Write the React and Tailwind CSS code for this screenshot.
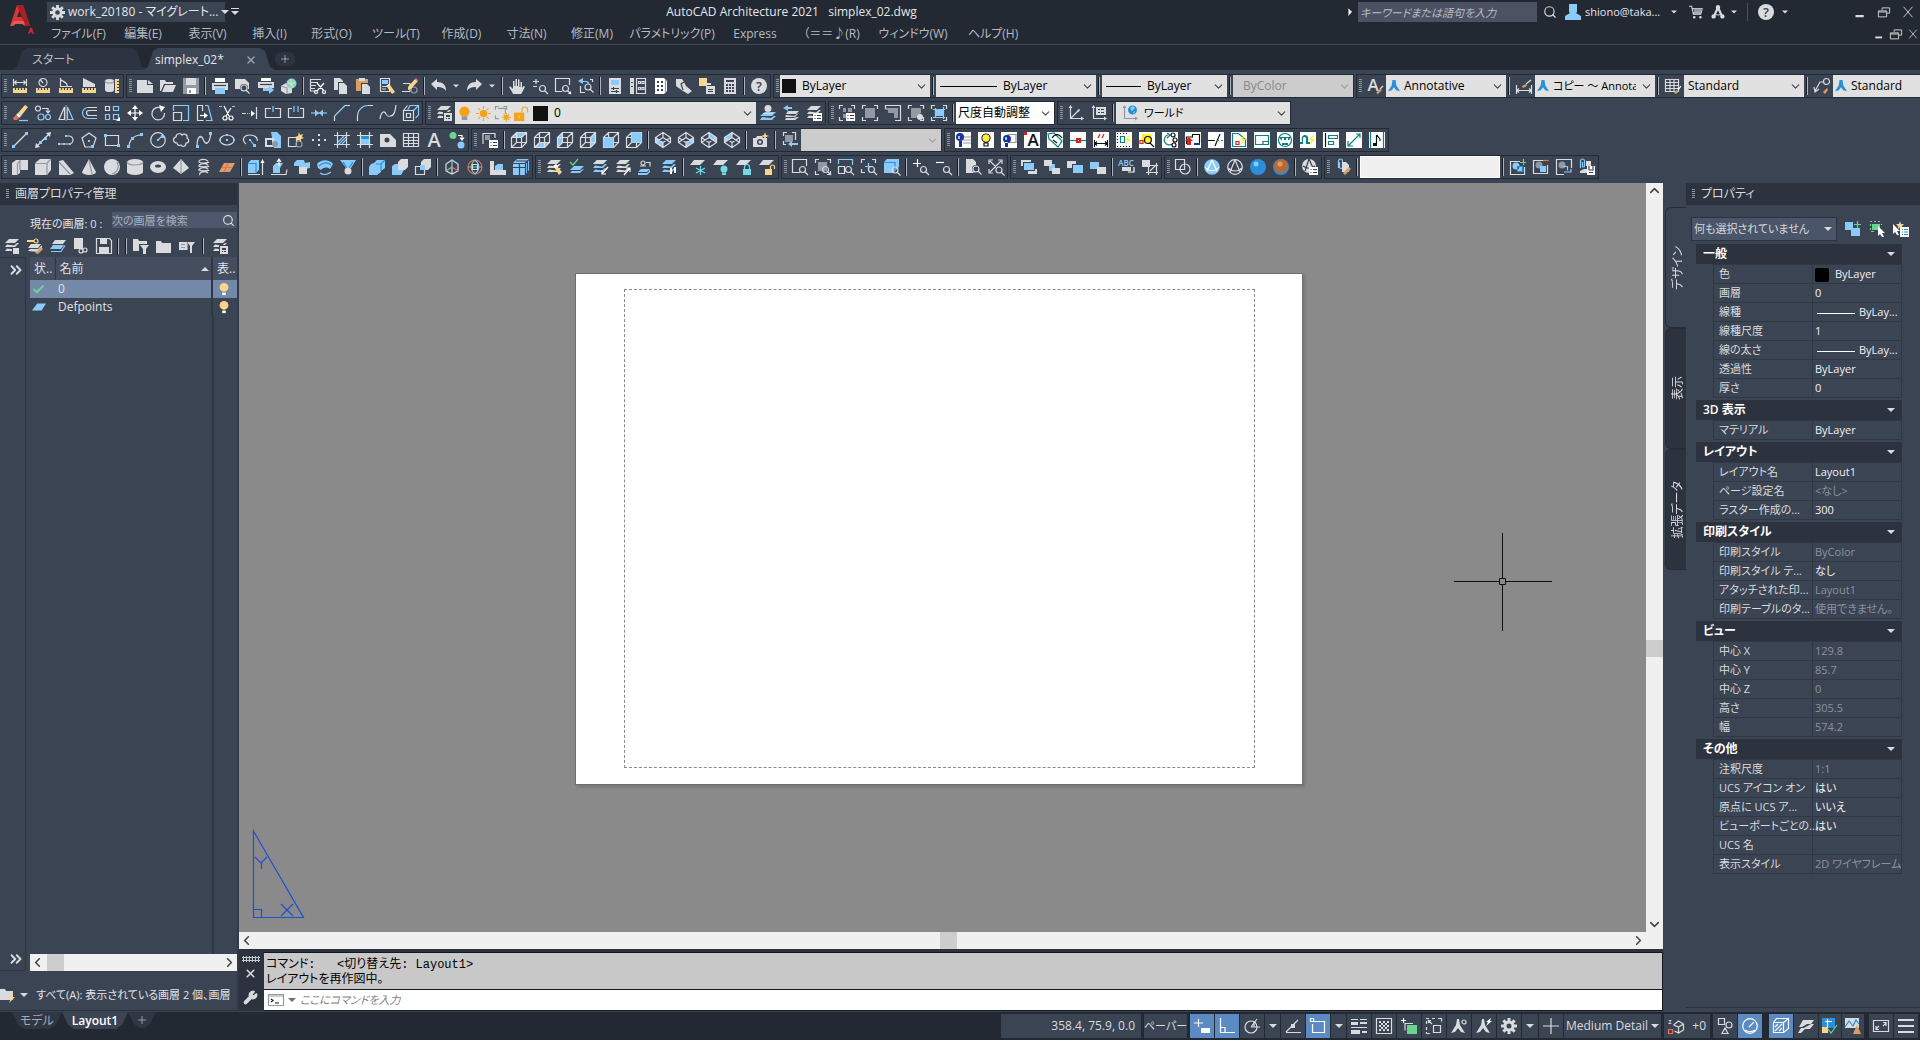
import { Check, ChevronDown, ChevronLeft, ChevronRight, ChevronUp, ChevronsRight, Search, Wrench, X } from "lucide-react";

const colors = {
  w: "#d9dbde",
  b: "#8bcbfb",
  y: "#fbd58a",
  k: "#111111",
  d: "#3b4453",
  g: "#6ad391",
  r: "#ec6a5e",
  s: "#d81f1f",
  o: "#f5a31a",
  c: "#6fdbe6",
  t: "#0b8280",
  n: "#d9a066",
  e: "#9299a3",
  v: "#2a8fd8",
  x: "#ffffff",
  l: "#ffee2e",
  i: "#20309a",
};

const circle = (x, y, r) => `M${x - r} ${y}a${r} ${r} 0 1 0 ${2 * r} 0a${r} ${r} 0 1 0 ${-2 * r} 0z`;
const mag = (x = 10.5, y = 10.5, r = 3) => `w:${circle(x, y, r)}M${x + 2} ${y + 2}l3.5 3.5`;

const ruler = ["Y:M1 10h14v5H1z", "d:M3.5 10v2M6.5 10v2M9.5 10v2M12.5 10v2"];
const frame = "w:M.5 4V.5H4M12 .5h3.5V4M15.5 12v3.5H12M4 15.5H.5V12";
const list = ["X:M7 8h9v8H7z", "d:M8.5 10.5h1M11 10.5h4M8.5 13.5h1M11 13.5h4"];
const stack = "M5 1h10l-4 4H1zM3 6.5L1 9h10l4-4h-2l-3 2.500zM3 10.500L1 13h10l4-4h-2l-3 2.500z";
const cube = "w:M.5 5.5h10v10h-10zM.5 5.5l5-5h10v10l-5 5M10.5 5.5l5-5M5.5 .5v10h10M.5 15.5l5-5";
const iso = "w:M8 .5l7.5 5v5L8 15.5.5 10.5v-5zM.5 5.5L8 10.5l7.5-5M8 10.5v5M.5 10.5L8 5.5l7.5 5M8 5.5v-5";
const paper = "X:M0 0h16v16H0z";
const bolt = "L:M14 2l-5 6h3l-3 6 6-7h-3z";

// Each icon is a list of "key:path" entries; a lower case key strokes, an upper case key fills, "#" sets text.
const icons = {
  dist: ["w:M1.5 1v7M14.5 1v7M2 4.5h12M4.500 2.500l-2 2 2 2M11.500 2.500l2 2-2 2", ...ruler],
  radius: [`w:${circle(8, 4.5, 4)}M8 5L5.500 2`, ...ruler],
  angle: ["w:M2.5 0v8.500H14M2.500 2.500a7 7 0 0 1 7 6M2 1l7 5", ...ruler],
  area: ["W:M2 0l12 6v3H2z", ...ruler],
  volume: ["W:M1 3a4.5 2 0 0 1 9 0v9a4.5 2 0 0 1-9 0z", "e:M1 3a4.5 2 0 0 0 9 0", "Y:M11 1h4v14h-4z", "d:M13 3.500h2M13 6.500h2M13 9.500h2M13 12.500h2"],
  new: ["W:M0 2h10v5h6v8H0z", "W:M11 2l5 4h-5z"],
  open: ["W:M0 2h5l1 2h7v2H4L1 13H0z", "W:M5 7h11l-3 7H2z"],
  save: ["E:M0 0h16v16H0z", "W:M3 0h10v7H3z", "X:M4 10h9v6H4z", "E:M6 12h2v3H6z"],
  plot: ["X:M3 0h10v4H3z", "W:M0 5h16v7H0z", "d:M2 7.500h12", "B:M3 10h10v6H3z"],
  preview: ["W:M0 1h10l4 4v6H0z", `D:${circle(9, 10, 4)}`, mag(9, 10)],
  publish: ["X:M3 0h10v3H3z", "W:M0 4h16v6H0z", "d:M2 6.500h12", "B:M5 10h6V7.500l5 4.500-5 4v-3H5z"],
  globe: ["W:M0 8l5-3 6 4v6l-6 1-5-3z", `C:${circle(10.5, 5.5, 5)}`, "y:M7 4l3 3 4-3M10 1v5l2 4", "e:M0 8l6 2v6"],
  cut: ["w:M0 1.500h11M0 4.500h8M0 7.500h6M0 10.500h5M.500 1v12H6", `x:M7 5l7 8M14 5l-7 8${circle(6, 14, 1.5)}${circle(14, 14, 1.5)}`],
  copyclip: ["W:M1 0h6l3 3v9H1z", "D:M5 4h8v12H5z", "W:M6 5h5l3 3v8H6z"],
  paste: ["N:M0 1h12v12H0z", "W:M3 0h6v3H3z", "D:M5 5h8v11H5z", "W:M6 6h5l3 3v7H6z"],
  match: ["w:M1.5 .5h9v13h-9z", "B:M3 2h6v4H3z", "w:M3 8.500h5M3 11h4", "Y:M8 9l3-2 5 7-3 2z", "X:M7 8l3-2 1 1-3 2z"],
  blockedit: ["w:M1 5.500h7v8H0", `e:${circle(12, 12, 3)}`, "Y:M6 9l7-8 3 2-7 8-3 1z", "R:M13 1l1-1 2 2-1 1z"],
  undo: ["W:M0 6l6-5v3c6 0 9 3 9 9-2-3-4-4-9-4v3z"],
  redo: ["W:M16 6l-6-5v3c-6 0-9 3-9 9 2-3 4-4 9-4v3z"],
  caret: ["W:M0 4h16l-8 8z"],
  gear: [`W:${circle(8, 8, 5.5)}`, "W:M6.500 0h3v16h-3zM0 6.500h16v3H0zM1.300 3.400l2.100-2.100 11.300 11.300-2.100 2.100zM12.600 1.300l2.100 2.100L3.400 14.700l-2.100-2.100z", `D:${circle(8, 8, 2.5)}`],
  hand: ["W:M4 16c-1-3-3-5-4-7l1.500-.5L4 11V3h1.500v5h1V1H8v7h1V1.500h1.500V9h1V4H13v6l1.500-2 1.500.5c-1 2-2 5-4 7.500z"],
  zoomrt: ["w:M1 3.500h6M4 1v5M1 8.500h4", mag()],
  zoomwin: ["w:M14.500 7V.5H.5v13H7", mag(), "X:M16 16h-3l3-3z"],
  zoomprev: ["b:M3 3.500h6l2 2", "B:M0 3l5-3v6z", "w:M2.500 8v6.500H7M14.500 4V1.500H12", mag(10, 9)],
  props: ["W:M2 0h12v16H2z", "B:M4 2h8v5H4z", "d:M4 10.500h8M4 13.500h8M6.500 9v3M9.500 12v3"],
  designcenter: ["W:M0 0h4v16H0z", "w:M6.5 .5h9v15h-9zM8.500 3.500h2v2h-2zM12 3.500h2v2h-2zM8.500 9.500h2v2h-2zM12 9.500h2v2h-2z", "d:M1 4.500h2M1 8.500h2"],
  toolpal: ["X:M2 0h9l3 3v10l-3 3H2z", "D:M4 3h2v2H4zM8 3h2v2H8zM4 7h2v2H4zM8 7h2v2H8zM4 11h2v2H4zM8 11h2v2H8z", "e:M12.500 1v14"],
  sheetset: ["W:M0 1h6l2 3 2 4 6 5-4 3-5-3-7-5z", "d:M7 12L5 6l3-2"],
  dbconnect: ["Y:M0 0h8v8H0z", "W:M5 5h7v2H5zM7 8h9v8H7z", "d:M9 11.500h5M9 13.500h5"],
  calc: ["W:M2 0h12v16H2z", "D:M4 2h8v2H4zM4 6h2v2H4zM7 6h2v2H7zM10 6h2v2h-2zM4 9h2v2H4zM7 9h2v2H7zM10 9h2v2h-2zM4 12h2v2H4zM7 12h2v2H7zM10 12h2v2h-2z"],
  help: [`W:${circle(8, 8, 8)}`, "#d:8,12.5,13,?"],
  textstyle: ["#w:6,13,17,A", "N:M9 15l4-4 2 1-4 4z", "w:M13 11l3-3"],
  dimstyle: ["w:M.500 7v9M15.500 7v9M1 12.500h14M3 10.500l-2 2 2 2M13 10.500l2 2-2 2", "N:M6 8l4-2 1 2-4 2z", "w:M10 6l5-4"],
  tablestyle: ["w:M.5 1.500h13v12H.5zM.500 4.500h13M.500 7.500h13M.500 10.500h13M5 2v12M9 2v12", "N:M9 15l3-3 2 1-3 3z", "x:M13 12l3-4"],
  leaderstyle: [`w:${circle(12.5, 3.5, 3)}M9 4H6L1 13M0 9l1 5 4-3`, "N:M9 14l4-4 1 2-3 4z"],
  annot: ["V:M6 0h4l1 7 5 8-5-1.500-3-4-3 4L0 15l5-8z"],

  erase: ["Y:M6 8l7-8 3 2-7 9z", "X:M4 10l2-2 3 3-2 2z", "R:M1 13l3-3 3 3-2 2H2z", "b:M7 15.500h9"],
  copy: [`w:${circle(3, 3.5, 2.5)}M7 3.500h6v4M11 5.500l2 2.500 2-2.500`, `b:${circle(6, 12, 3)}${circle(13, 12, 2.5)}`],
  mirror: ["w:M6.500 2v12.500H1z", "e:M8 0v16", "b:M9.500 2v12.500H15z"],
  offset: ["b:M7 2.500a5 5 0 0 0 0 11h9", "w:M16 2.500H7M16 5.500H8a2.500 2.500 0 0 0 0 5h8"],
  array: ["w:M1.500 1.500h4v4h-4z", "b:M9.500 1.500h5v4h-5zM1.500 9.500h4v5h-4zM9.500 9.500h5v5h-5z", "X:M16 16h-4l4-4z"],
  move: ["x:M8 2v12M2 8h12", "X:M8 0l3 4H5zM8 16l-3-4h6zM0 8l4-3v6zM16 8l-4 3V5z"],
  rotate: ["w:M11 3a6.300 6.300 0 1 0 3.500 5", "X:M9 0l6 2-4 5z"],
  scale: ["b:M.500 6V.5h15v15H10", "w:M.500 7.500h8v8h-8z"],
  stretch: ["w:M6.500 6V.5h-5v15h6", "x:M4 10.500h5", "X:M8 7.500l4 3-4 3z", "b:M9 .5h3l4 15h-6"],
  trim: [`x:M5 1l5 10M12 3L7 11${circle(6, 13, 2)}${circle(12, 13, 2)}`, "b:M0 1.500h3M13 1.500h3"],
  extend: ["w:M0 8.500h4M14.500 2v12", "b:M5 8.500h1M7 8.500h1", "X:M9 5.500l4 3-4 3z"],
  breakpt: ["w:M6 3.500H.500v9h15v-9H10", "b:M8 1v6"],
  break: ["w:M4 3.500H.500v9h15v-9H12", "b:M6 1v6M10 1v6"],
  join: ["b:M0 8h16", "B:M4 4.500L8 8l-4 3.500zM12 4.500L8 8l4 3.500z"],
  chamfer: ["w:M.500 16v-5M11 .500h5", "b:M.500 11L11 .500"],
  fillet: ["w:M.500 16v-5M11 .500h5", "b:M.500 11A10.500 10.500 0 0 1 11 .500"],
  blend: ["w:M0 14c1-7 4-9 6-5M10 11c4 0 5-4 6-11", "b:M6 9c1 2 2 3 4 2"],
  explode: ["b:M4.500 5.500L7 .5h8.500V10l-3 3", "w:M.500 5.500h10v10H.5zM.5 5.500l4-5M3.500 8.500h4v4h-4z", "b:M10.500 5.500l5-5"],
  layers: [`W:${stack}`, "D:M7 7h9v9H7z", "W:M8 8h8v8H8z", "D:M10 10h4v2h-4zM10 13h1v1h-1zM12 13h2v1h-2z"],
  laycur: ["B:M5 7h11l-4 4H0zM2 12l-2 3h12l4-4h-2l-3 2z", `W:${circle(8, 3.5, 3.5)}M3 8h10v1H3z`],
  layprev: ["W:M5 6h11l-3 3H3zM3 10l-1 2h10l4-4-2 1-3 2zM3 13l-1 2h10l4-3-2 0-3 1z", "B:M0 3l5-3v2h4v2H5v2z"],
  laystate: [`W:${stack}`, ...list],
  vplist: [frame, "E:M4 3h3v4H4zM9 3h4v4H9zM4 9h3v4H4z", ...list],
  vp1: [frame, "E:M3 3h10v10H3z"],
  vppoly: ["w:M.500 4V.500H15.500V15.500H10M.500 4h4", "E:M3 3h10v10h-4V8H3z"],
  vpobj: [frame, "E:M3 3h10v5l-5 5H3z", `W:${circle(12, 12, 3)}`],
  vpclip: [frame, "B:M4 5h8v6H4z", "b:M2 12.500h12M12.500 2v12M2 4.500h12M4.500 3v10"],
  ucs: ["w:M2.500 2v11.500H15M3 13l8-8", "W:M2.500 0l2 3h-4zM16 13.500l-3-2v4zM12 4l-3 1 2 2z"],
  ucslist: ["w:M2.500 2v11.500H15", "W:M2.500 0l2 3h-4zM16 13.500l-3-2v4zM5 2h10v8H5z", "d:M7 4.500h2M10 4.500h3M7 7.500h2M10 7.500h3"],
  world: ["e:M2.500 2v11.500H15", "E:M2.500 0l2 3h-4zM16 13.500l-3-2v4z", `V:${circle(10.5, 5, 4.5)}`, "B:M8 3l3-2 2 2-3 3zM11 7l2-1-1 3z"],

  line: ["w:M2 14L14 2", "B:M0 13h3v3H0zM13 0h3v3h-3z"],
  xline: ["w:M2 14L14 2", "W:M16 0l-5 1 4 4zM0 16l1-5 4 4z", "B:M4 9h3v3H4zM9 5h3v3H9z"],
  pline: ["w:M1 12h4M7 12h4a4 4 0 0 0 0-8H9", "B:M0 11h2v2H0zM5 11h2v2H5zM11 11h2v2h-2zM7 3h2v2H7z"],
  polygon: ["w:M8 1l7 5-3 9H4L1 6z", "B:M7 8h2v2H7zM10 13h3v3h-3z"],
  rect: ["w:M1.500 3.500h13v10h-13z", "B:M0 2h3v3H0zM13 12h3v3h-3z"],
  arc: ["w:M2 15C2 8 7 3 14 3", "B:M0 13h3v3H0zM4 5h3v3H4zM13 1h3v3h-3z"],
  circle: [`w:${circle(8, 8, 7.3)}`, "b:M8 8l4-4", "B:M7 7h2v2H7zM11 3h3v3h-3z"],
  cloud: ["w:M4 11c-4 0-5-5-1-6 0-4 5-4 6-2 3-2 6 0 5 3 3 2 2 5-1 5 0 4-4 4-5 2-2 1-4 0-4-2z"],
  spline: ["w:M1 15C1 4 5 2 7 7s6 8 8-6", "B:M0 13h3v3H0zM4 4h2v2H4zM9 10h2v2H9zM13 0h3v3h-3z"],
  ellipse: ["w:M1 8a7 5 0 0 1 14 0a7 5 0 0 1-14 0z", "B:M0 7h2v2H0zM14 7h2v2h-2zM7 2h2v2H7zM7 7h2v2H7z"],
  earc: ["w:M4 12C-1 8 2 3 8 3s8 4 7 6", "b:M8 8l4 5", "B:M7 7h2v2H7zM11 12h3v3h-3z"],
  insert: ["B:M6 0h6l4 4v12H9z", "W:M0 6h9v9H0z", "D:M2 8h5v5H2z", `E:${circle(10, 12, 3)}`],
  block: ["w:M.500 5.500h8v9h-8z", `e:${circle(11, 12, 3)}`, "Y:M11 0l1 3 3-1-1 3 2 1-3 1 0 3-2-2-3 1 1-3-2-1 3-1z"],
  points: ["W:M7 2h2v2H7zM1 7h2v2H1zM13 7h2v2h-2zM7 7h2v2H7zM7 12h2v2H7z"],
  hatch: ["w:M3.500 0v16M12.500 0v16M0 3.500h16M0 12.500h16", "b:M4 10l6-6M5 12l7-7M8 12l4-4"],
  gradient: ["B:M4 4h8v8H4z", "V:M4 4h8v3H4z", "w:M3.500 0v16M12.500 0v16M0 3.500h16M0 12.500h16"],
  region: ["W:M0 2h10l6 6v7H0z", `D:${circle(7, 8, 2.5)}`],
  table: ["w:M.5 1.500h15v13H.5zM.5 5.500h15M.5 8.500h15M.5 11.500h15M5.500 2v13M10.500 2v13"],
  mtext: ["#w:8,15,20,A"],
  addsel: [`G:${circle(4, 3.5, 3.5)}`, `B:${circle(12, 13, 3.5)}`, "x:M9 3.500h4v4M11 5.500l2 2.500 2-2.500"],

  viewdlg: ["w:M1 12V1.500h12V6", "E:M3 3h5v5H3z", ...list],
  top: ["B:M.5 5.500l5-5h10l-5 5z", cube],
  bottom: ["B:M.5 15.500l5-5h10l-5 5z", cube],
  left: ["B:M.5 5.500l5-5v10l-5 5z", cube],
  right: ["B:M10.500 5.500l5-5v10l-5 5z", cube],
  front: [cube, "B:M.5 5.500h10v10h-10z"],
  back: [cube, "B:M5.500 .5h10v10h-10z"],
  sw: ["B:M.5 5.500L8 10.500v5L.5 10.500z", iso],
  se: ["B:M15.500 5.500L8 10.500v5l7.500-5z", iso],
  ne: ["B:M8 .5l7.500 5v5L8 5.500z", iso],
  nw: ["B:M8 .5L.5 5.500v5L8 5.500z", iso],
  camera: ["W:M0 6h3l1-2h5l1 2h4v9H0z", `D:${circle(7, 10, 3)}`, `W:${circle(7, 10, 1.5)}`, "Y:M12 0l1 3 3 1-3 1-1 3-1-3-3-1 3-1z"],
  vpscale: ["w:M4 12.500H1.500V9M1.500 4V.500H5M10 .500h3.500V8", "E:M3 3h8v7H3z", "B:M6 12l4-3v2h6v2h-6v2z"],

  px1: [paper, "e:M8 5h8M8 8h8M8 11h8", `I:${circle(5, 5, 4)}M4 9h3v6H4z`, "C:M3 4h2v3H3z"],
  px2: [paper, `k:${circle(8, 6, 4)}M6 11h4v3H6z`, `L:${circle(8, 6, 3.4)}`],
  px3: [paper, "e:M7 2.500h8v8H7z", `I:${circle(6, 7, 4)}M4 10h3v5H4z`, "C:M4 5h2v3H4z"],
  px4: [paper, "#k:9,14,17,A", "S:M0 0h3v3H0z"],
  px5: [paper, "t:M1 2l6-1 8 8-4 6-9-8z", "k:M5 6c4-6 8-3 10 0M6 8l4 3"],
  px6: [paper, "t:M0 8.500h16", "S:M6 6h5v5H6z", "X:M8 8h1v1H8z"],
  px7: [paper, "s:M5 6l2-4M9 6l2-4", "k:M1.500 8v7M14.500 8v7M2 11.500h12M4 9.500l-2 2 2 2M12 9.500l2 2-2 2"],
  px8: [paper, "k:M1 1.500h1M4 1.500h1M7 1.500h1M10 1.500h1M1 14.500h1M4 14.500h1M7 14.500h1M10 14.500h1M13 14.500h1M1.500 4v1M1.500 7v1M1.500 10v1", "t:M4.500 4.500h4v6h-4z", bolt],
  px9: [paper, "L:M3 2h9v9H3z", "s:M1 8.500h3v3H1z", `k:${circle(9, 8, 3.5)}M11 11l4 4`],
  px10: [paper, "t:M6 3a5 5 0 1 0 4 9M5 1l3 2-3 3", `k:${circle(11, 3, 2)}${circle(13, 8, 2)}${circle(12, 13, 2)}`],
  px11: [paper, "k:M1.500 12V5h6V2.500h7V11", "S:M4 5l4 4H6v4H2V9H0z", "I:M9 11h6v2H9z"],
  px12: [paper, "k:M0 8.500h7M7 14L12 2", "t:M9 8.500h2M13 8.500h2"],
  px13: [paper, "t:M1.500 1.500h6l7 6v7h-13z", "s:M5 9.500h3v3H5z", bolt],
  px14: [paper, "t:M1.500 3.500h13v9h-13zM9 12V9.500h5"],
  px15: [paper, `t:${circle(8, 8, 6.5)}`, "T:M2 5h12l-2 3H4zM5 11h6v2H5z", "X:M5 6h2v2H5zM9 6h2v2H9z"],
  px16: [paper, "T:M0 12v-2h2V9C0 1 10 1 8 9v1h2v2H6V8c1-4-4-4-3 0v4z", bolt],
  px17: [paper, "k:M2.500 1v14", "t:M5.500 3.500h9v3h-9zM5.500 9.500h5v3h-5z"],
  px18: [paper, "t:M2 14L14 2M10 2h4v4M2 9v5h5"],
  px19: [paper, "t:M1.500 0v16M14.500 0v16", "k:M7.500 3v9M8 3c1 3 4 3 3 6", "K:M4 11h4v3H4z"],

  wall: ["W:M0 4l4-3h12v10l-8 0v3l-3 2H0z", "e:M5.500 16V5l3-4M8 11V2", "D:M9 12h7v4H9z"],
  box: ["W:M0 4l5-4h11v11l-4 5H0z", "e:M0 4.500h12M12 4v12M12 4l4-4"],
  wedge: ["W:M1 2l4-1 11 13-4 2H1z", "e:M1 3l11 12"],
  cone: ["W:M8 0l7 13a7 3 0 0 1-14 0z", "e:M8 1l3 14"],
  sphere: [`W:${circle(8, 8, 8)}`, "e:M13 3a8 8 0 0 1-5 12"],
  cylinder: ["W:M0 3a8 3 0 0 1 16 0v10a8 3 0 0 1-16 0z", "e:M0 3a8 3 0 0 0 16 0"],
  torus: ["W:M0 8a8 6 0 0 1 16 0a8 6 0 0 1-16 0z", "D:M5 7a3 1.500 0 0 1 6 0a3 1.500 0 0 1-6 0z"],
  pyramid: ["W:M8 0l8 9-8 6-8-6z", "e:M8 0v15"],
  helix: ["w:M12 2C8-1 2 1 3 3s9 1 10 0M12 6c-4-3-10 0-9 1s9 1 10 0M12 10c-4-3-10 0-9 1s9 1 10 0M12 14c-4-3-10 0-8 2"],
  plane: ["N:M5 4h11l-5 9H0z", "r:M3 8.500h10M9 4L5 13"],
  extrude: ["B:M0 4l3-3h8v10l-3 3H0z", "v:M0 4.500h8v9", "w:M0 15.500h12M14.500 16V2", "X:M14.500 0l2 4h-4z"],
  presspull: ["B:M2 7l3-3h7l-3 5v5H2z", "x:M8 7V1M6 3l2-3 2 3", "w:M0 15.500h15l1-5"],
  sweep: ["B:M0 4l3-3h7l1 3 5-1v6l-5 1H5V7H0z", "W:M5 8h8v7H5z"],
  revolve: ["B:M0 5c4-5 12-5 16 0l-3 5c-3-2-6-2-9 1L1 9z", "b:M3 14c3 2 7 2 11-1", "v:M2 7c4-4 9-4 12-1"],
  loft: ["B:M0 1h16l-5 8H6z", "v:M3 3l4 6M13 3l-4 6", `W:${circle(8, 12, 3.500)}`],
  union: ["B:M5 4l3-3h8v8l-4 3v1l-4 3H0V8l2-3z", "v:M7 5h5l4-4M12 5v7"],
  subtract: ["W:M6 3l3-3h7v8l-3 3H6z", "B:M0 7l3-2h3v6h6l-3 5H0z"],
  intersect: ["W:M6 3l3-3h7v8l-3 3H6z", "w:M.5 7.500h9v8h-9z", "B:M5 6h5v5H5z"],
  gizmo: ["w:M8 1l6 4v7l-6 3-6-3V5zM8 8v7", "g:M8 8L2 12", "r:M8 8l6 4", "b:M8 8V1"],
  gizmo2: [`r:${circle(8, 8, 7)}`, "g:M8 1c-5 4-5 10 0 14M1 8h14", "b:M8 1c5 4 5 10 0 14", "w:M5.500 5.500h5v5h-5z"],
  slice: ["W:M0 2h4v14H0z", "B:M5 7l3-2h5v7H5z", "W:M4 11h12v5H4z"],
  boxes: ["B:M0 4l4-4h12v11l-4 5H0z", "d:M0 8.500h12M6.500 4v12M0 4.500h12l4-4M12.500 4v12M3 2h11M14.500 2v12"],

  laymatch: [`W:${stack}`, "Y:M8 8l3-1 5 6-3 3z", "X:M7 7l3-2 2 2-3 2z"],
  laymake: ["B:M5 7h10l-4 4H1zM3 12l-2 2h10l4-4-1 0-3 2z", "g:M1 3l3 3 5-6"],
  layiso: [`B:${stack}`, "W:M5 1h10l-4 4H1z", "x:M16 8l-6 7M10 11v4h4"],
  layuniso: [`W:${stack}`, "x:M9 16l6-7M11 9h4v4"],
  laycopy: ["B:M3 10h9l-3 3H0zM0 14h9l3-3v2l-3 3H0z", `w:${circle(5, 4, 2)}M8 3.500h4v4M2 7h6`],
  laywalk: [`B:${stack}`, "X:M9 9h2v6H9zM13 8h2v6h-2z"],
  layfreeze: ["W:M4 1h11l-5 5H0z", "c:M10.500 7v9M6 9l9 5M6 14l9-5"],
  layoff: ["W:M4 1h11l-5 5H0z", `C:${circle(11, 10, 3.5)}M9 13h4v3H9z`],
  laylock: ["W:M4 1h11l-5 5H0z", "C:M7 10h8v6H7z", "c:M8.500 10V8a2.500 2.500 0 0 1 5 0v2"],
  layunlock: ["W:M4 1h11l-5 5H0z", "Y:M6 10h7v6H6z", "y:M11.500 10V8a2 2 0 0 1 4 0v2"],

  zwin: ["w:M14.500 7V.5H.5v13H8", mag()],
  zdyn: [frame, "E:M3 3h9v9H3z", mag()],
  zscale: ["b:M.5 5V.5h14V6", "w:M.500 7.500h6v7h-6z", mag()],
  zcenter: ["w:M.5 4V.5H4M11 .5h3.5V4M4 13.500H.5V10", "b:M7.500 4v7M4 7.500h7", mag()],
  zobj: ["B:M0 3l3-3h12v8l-6 6H0z", "v:M0 3.500h11v9", mag(11, 11)],
  zin: ["x:M0 4.500h8M4.500 0v8", mag()],
  zout: ["x:M0 3.500h8", mag()],
  zall: ["W:M1 0h7l3 3v11H1z", `D:${circle(11, 10, 4)}`, mag(11, 10)],
  zext: ["w:M2 2l11 11M13 2L2 13M1 5V1h4M10 1h4v4M1 10v4h4", `D:${circle(11, 11, 4)}`, mag(11, 11)],

  front1: ["W:M0 1h10v6H0zM7 10h9v5H7z", "D:M2 3h12v9H2z", "B:M3 4h10v7H3z"],
  back1: ["B:M5 5h6v7H5z", "W:M0 1h8v6H0zM8 9h8v6H8z"],
  above: ["W:M0 2h9v7H0z", "D:M5 5h11v9H5z", "B:M6 6h10v8H6z"],
  under: ["B:M0 3h9v7H0z", "W:M7 8h9v7H7z"],
  abc: ["#b:7,7,8,ABC", "W:M3 8h9v4H3z", "x:M9 13h6V8"],
  hatchback: ["W:M0 1h8v7H0z", "w:M6.500 4v12M14.500 4v12M4 6.500h12M4 13.500h12M8 12l5-5"],
  draw2d: ["w:M.500 .500h9v10h-9z", `w:${circle(10, 10, 5)}`],
  vs1: [`B:${circle(8, 8, 7.800)}`, "x:M8 1L3 12M8 1l5 11M1 8c4 5 10 5 14 0"],
  vs2: [`w:${circle(8, 8, 7.300)}M8 1L3 13M8 1l5 12M1 9c4 4 10 4 14 0`],
  vs3: [`V:${circle(8, 8, 8)}`, `B:${circle(6, 5, 2.500)}`],
  vs4: [`V:${circle(8, 8, 8)}`, `U:${circle(8, 7, 7)}`, `N:${circle(7, 5, 2.500)}`],
  vs5: [`W:${circle(7, 7, 7)}`, "d:M7 0L3 12M7 0l5 11M1 7c4 3 8 3 12 0", ...list],
  attach: ["b:M3.500 9V2a2 2 0 0 1 4 0v6a1 1 0 0 1-3 0V3", "W:M7 3h4l3 3v7H7z", "N:M8 14l6-6 2 2-6 6z"],
  grp1: ["w:M10 2.500H.500v13h14V8", `B:${circle(6, 7, 3.500)}M7 7h6v6H7z`, "v:M7.500 7.500h5v5h-5z", "g:M13.500 0v6M10 3.500h6"],
  grp2: ["w:M10 1.500H.500v13h14V6", `E:${circle(6, 6, 3.500)}`, "B:M7 7h6v6H7z", "r:M10 1.500h6"],
  grp3: ["w:M15.500 9V.500H.500v15H8", `E:${circle(6, 6, 3.500)}`, "b:M6.500 7.500h5v4M8 13h7v-3"],
  grp4: ["b:M1.500 9V2a2 2 0 0 1 4 0v5a1 1 0 0 1-2 0V3", "W:M7 2h5v5H7zM5 10h3v4H1v-2z", "X:M8 7h8v9H8z", "d:M10 7v4h4V7M10 13.500h4"],

  lnew: [`W:${stack}`, "D:M8 9h8v7H8z", "W:M9 10h6v6H9z"],
  lkey: ["W:M4 6h10l-3 4H1zM1 13l2-2 8 0 4-4v3l-4 4z", "Y:M0 2h7v2H0z", `y:${circle(9, 3, 2)}`, "N:M8 15l6-6 2 2-5 5z"],
  lblue: ["W:M5 2h11l-3 4H2z", "B:M3 7h11l-3 4H0z", "b:M1 13.500h10l4-6"],
  ldoc: ["W:M1 0h9v11H1z", `w:${circle(8, 13, 2)}${circle(12, 12, 2)}`],
  lsave: ["w:M.500 .500h13l2 2v13H.500z", "W:M4 1h7v5H4zM3 9h10v6H3z"],
  lfilt: ["W:M0 1h5l1 2h8v3H0zM0 6h8v7H0z", "D:M6 6h10v10H6z", "W:M7 7h9l-3 4v5h-3v-5z"],
  lfold: ["W:M0 3h5l1 2h9v10H0z"],
  lgrp: ["W:M0 4h8v8H0zM8 4h8l-3 4v7h-2V8z", "e:M2 6.500h4M2 9.500h4M8.500 4v8"],
  leaf: ["B:M6 4h10l-5 8H0z"],
  psel1: ["B:M0 1h8v8H0zM6 7h9v8H6z", "g:M12.500 0v7M9 3.500h7"],
  psel2: ["g:M1 .500h2M5 .500h2M9 .500h2M1.500 3v2M1.500 7v2M12.500 3v1M2 10.500h3", "G:M3 3h8v6H3z", "X:M9 5l7 7h-3l2 4-2 0-2-3-2 2z"],
  psel3: ["X:M0 3l7 7H4l2 4-2 0-2-3-2 2z", "Y:M7 0l1 3 3 0-2 2 1 3-3-2-2 2 0-3-2-2 3 0z", "X:M7 6h9v10H7z", "v:M9 8.500h1M11 8.500h4M9 11h1M11 11h4M9 13.500h1M11 13.500h4"],
  ffolder: ["W:M0 2h5l1 2h7v9H0z", "Y:M13 5l-5 6h3l-2 5 6-6h-3z"],

  dyn: ["x:M4.500 1v8M0 5h9", "X:M7 10h9v5H7z"],
  ortho: ["x:M1.500 0v14.500H16M2 9.500h4v5"],
  polar: [`w:${circle(7, 9, 6)}M7 9h9M7 9l6-8M10 4v5`],
  isodraft: ["w:M1 14.500h15M1 14L13 2", "W:M6 6h4v4H6z"],
  osnap: ["x:M4 3.500h10.500v11h-12V6", "x:M.500 .500h3v3h-3z"],
  lwt: ["W:M0 1h7v1H0zM9 1h7v1H9zM0 4h7v3H0zM9 4h7v2H9zM0 9h16v1H0zM0 12h9v4H0zM11 13h5v2h-5z"],
  transp: ["w:M.5 .5h15v15H.5z", "W:M3 3h2v2H3zM7 3h2v2H7zM11 3h2v2h-2zM5 5h2v2H5zM9 5h2v2H9zM3 7h2v2H3zM7 7h2v2H7zM11 7h2v2h-2zM5 9h2v2H5zM9 9h2v2H9zM3 11h2v2H3zM7 11h2v2H7zM11 11h2v2h-2z"],
  cycle: ["x:M2.500 0v5M0 2.500h5", "w:M4 12.500V5.500h8", "G:M6 7h10v9H6z"],
  annosel: ["w:M0 .5h3M6 .5h3M12 .5h3.500v3M.5 3v3M.5 9v3M.5 14v1.500H4M2 2l4 4M2.500 5V2.500H5M7.500 7.500h7v7h-7z"],
  anno1: ["W:M6 1h2l1 6 5 8-4-1-3-4-3 4-4 1 5-8z", `w:${circle(13, 4, 2)}`],
  anno2: ["W:M6 1h2l1 6 5 8-4-1-3-4-3 4-4 1 5-8z", "X:M15 0l-5 4h2l-2 4 6-5h-2z"],
  plus: ["w:M8 0v16M0 8h16"],
  elev: ["w:M5.500 7l5-4 5 3v6l-5 3-4-2M5.500 7l5 2 5-3M10.500 9v6", "r:M.5 11.500h4v4h-4z", "#w:2,6,7,z"],
  isolate: ["w:M1.500 .500h6v6h-6z", `w:${circle(12, 7, 3)}M8 10l3 5.500H5z`],
  gauge: [`x:${circle(8, 8, 7.300)}M7 9l5-5M3 12c3 2 7 2 10 0`],
  hw: ["x:M.500 4.500h10v10h-10zM.500 4.500l3-4h12v10l-5 4M10.500 4.500l5-4M2 13l7-7M2 9l3-3M6 13l3-3"],
  ws: ["W:M5 2h11l-3 4H9L4 9H1zM3 10h3l7-4 3 0-4 5H7l-4 4H0z"],
  trust: ["V:M0 0h13v10H0z", "x:M3 3.500h7M5.500 1v8", "Y:M0 9h6v6H0z", "g:M6 11l3 4 6-8"],
  graph: ["W:M0 0h14v10H0z", "v:M0 9l4-6 4 5 3-6 3 4", "N:M12 7l4 9H8z"],
  full: ["w:M.5 2.500h15v11H.5zM3 11l3-3M3 8v3.500h3M13 5l-3 3M13 8V4.500h-3"],
  menu: ["W:M0 1h16v2H0zM0 7h16v2H0zM0 13h16v2H0z"],
  user: ["B:M4 0h8v8l-1 1 5 3v4H0v-4l5-3-1-1z"],
  cart: ["w:M0 1.500h3l2 9h9M4 4h11l-1 5H5", "E:M5 4h10l-1 4H6z", `W:${circle(6, 14, 1.500)}${circle(13, 14, 1.500)}`],
  aapp: ["W:M6 4h4l4 9-2 1-4-8-4 8-2-1z", "w:M4 10c2 2 6 2 8 0", `W:${circle(8, 2.500, 2.500)}${circle(3, 13, 2.500)}${circle(13, 13, 2.500)}`],
  restore: ["w:M5.500 5V2.500h10v7H12M.500 6.500h11v8H.500zM1 8h10"],
  minimise: ["W:M2 12h11v3H2z"],
  close: ["w:M2 1l12 14M14 1L2 15"],
  bulb: [`O:${circle(8, 6, 5.500)}`, "E:M5 11h6v4H5z"],
  bulbsm: [`Y:${circle(8, 6, 5)}`, "X:M6 12h4v3H6z"],
  sun: [`O:${circle(8, 8, 4)}`, "o:M8 0v3M8 13v3M0 8h3M13 8h3M2.500 2.500l2 2M11.500 11.500l2 2M13.500 2.500l-2 2M4.500 11.500l-2 2"],
  vpsun: ["e:M.5 4V.5H4M9 .5h3.500V4M4 13.500H.5V10M3 2.500h8v6", `O:${circle(12, 12, 2.500)}`, "o:M12 7.500v9M7.500 12h9M9 9l6 6M15 9l-6 6"],
  unlock: ["O:M0 7h11v9H0z", "o:M8.500 7V4a3 3 0 0 1 6 0v3", "W:M5 10h1v3H5z"],
  prompt: ["e:M.500 2.500h15v11h-15zM.500 4h15", "k:M3 7l2 1.500L3 10M7 11h4"],
  fill: ["K:M0 0h16v16H0z"],
};

colors.u = "#b9683a";

function Icon({ name, className = "size-4" }) {
  return (
    <svg viewBox="0 0 16 16" className={`${className} shrink-0 overflow-visible`} aria-hidden="true">
      {icons[name].map((entry, i) => {
        const cut = entry.indexOf(":");
        const key = entry.slice(0, cut);
        const body = entry.slice(cut + 1);
        if (key[0] === "#") {
          const [x, y, size, text] = body.split(",");
          return (
            <text key={i} x={x} y={y} fontSize={size} fontWeight="600" textAnchor="middle" fill={colors[key[1]]}>
              {text}
            </text>
          );
        }
        const color = colors[key.toLowerCase()];
        const filled = key !== key.toLowerCase();
        return <path key={i} d={body} fill={filled ? color : "none"} stroke={filled ? "none" : color} strokeWidth="1.2" />;
      })}
    </svg>
  );
}

function Tool({ name, className = "w-[23px]" }) {
  return (
    <button aria-label={name} className={`${className} h-full shrink-0 flex items-center justify-center`}>
      <Icon name={name} />
    </button>
  );
}

function Sep() {
  return (
    <div className="w-1.5 h-full shrink-0 flex justify-center py-0.5">
      <span className="w-px bg-[#171c24]" />
      <span className="w-px bg-[#aeb4bd]" />
    </div>
  );
}

function Toolbar({ children, className = "" }) {
  return (
    <div className={`h-6 shrink-0 flex items-center border border-[#232a35] ${className}`}>
      <div className="w-1.5 shrink-0 flex justify-center">
        <span className="h-3.5 w-[3px] bg-[repeating-linear-gradient(to_bottom,#8d95a1_0_1px,transparent_1px_2px)]" />
      </div>
      {children}
    </div>
  );
}

// "|" stands for a divider in a tool list
function Tools({ names }) {
  return names.split(" ").map((name, i) => (name === "|" ? <Sep key={i} /> : <Tool key={i} name={name} />));
}

function Combo({ value, label, width, tone = "bg-[#e1e1e1] text-black", children, pad = "pl-0.5", size = "text-xs" }) {
  return (
    <label className={`${width} ${tone} h-[22px] shrink-0 flex items-center gap-1 px-0.5`}>
      {children}
      <select aria-label={label} disabled={label === "plot style"} className={`flex-1 min-w-0 h-full appearance-none bg-transparent outline-none ${size} ${pad}`}>
        <option>{value}</option>
      </select>
      <ChevronDown size={13} strokeWidth={2} className="shrink-0 opacity-70" />
    </label>
  );
}

const Caret = ({ className = "size-2" }) => <Icon name="caret" className={className} />;

const menus = [
  "ファイル(F)", "編集(E)", "表示(V)", "挿入(I)", "形式(O)", "ツール(T)", "作成(D)", "寸法(N)",
  "修正(M)", "パラメトリック(P)", "Express", "（＝＝♪(R)", "ウィンドウ(W)", "ヘルプ(H)",
];

function TitleBar() {
  return (
    <header className="h-[45px] shrink-0 flex bg-[#222933] border-b border-[#3f4854]">
      <div className="w-[47px] shrink-0 flex pl-2 pt-1">
        <svg viewBox="0 0 26 32" className="w-[26px] h-8" aria-label="AutoCAD">
          <path d="M2 22L9 1h6l7 21h-5l-1-5H8l-2 5zM9 13h6l-3-8z" fill="#d5383a" fillRule="evenodd" />
          <path d="M9 1h6l7 21h-5z" fill="#a81f27" />
          <path d="M2 22l4-5h10l1 5-3-2H8z" fill="#e4595a" />
          <path d="M20 30l2-6h2l2 6h-1.500l-.5-1.500h-2L21.500 30z" fill="#d8242b" />
        </svg>
      </div>
      <div className="flex-1 min-w-0">
        <div className="h-6 flex items-center">
          <button className="w-[178px] h-5 bg-[#3b4453] flex items-center gap-[3px] px-[3px] text-[#e4e6e9] whitespace-nowrap">
            <Icon name="gear" className="size-[15px]" />
            <span className="flex-1 text-left">work_20180 - マイグレート...</span>
            <Caret />
          </button>
          <button aria-label="quick access" className="ml-1.5 flex flex-col items-center">
            <span className="w-2 h-px bg-[#d9dbde]" />
            <Caret />
          </button>
          <p className="flex-1 text-center text-[#e4e6e9] whitespace-pre text-xs">AutoCAD Architecture 2021   simplex_02.dwg</p>
          <ChevronRight size={12} className="text-white fill-white mr-0.5" />
          <input
            aria-label="help search"
            placeholder="キーワードまたは語句を入力"
            className="w-[179px] h-5 px-0.5 bg-[#4a5264] italic text-[11px] placeholder-[#b9bec7] outline-none"
          />
          <button aria-label="search" className="ml-1.5 text-[#d9dbde]"><Search size={14} /></button>
          <button className="ml-2 flex items-center gap-1 w-[112px] text-[#e4e6e9]">
            <Icon name="user" />
            <span className="flex-1 text-left text-[11px]">shiono@taka...</span>
            <Caret className="size-1.5" />
          </button>
          <button aria-label="app store" className="ml-3"><Icon name="cart" className="size-3.5" /></button>
          <button aria-label="apps" className="ml-2 flex items-center gap-1.5"><Icon name="aapp" className="size-3.5" /><Caret className="size-1.5" /></button>
          <span className="ml-2.5 w-px h-[18px] bg-[#4a5261]" />
          <button aria-label="help" className="ml-2.5 flex items-center gap-2"><Icon name="help" /><Caret className="size-1.5" /></button>
          <div className="ml-[66px] mr-1.5 flex gap-3">
            <button aria-label="minimise"><Icon name="minimise" className="size-3" /></button>
            <button aria-label="restore"><Icon name="restore" className="size-3" /></button>
            <button aria-label="close"><Icon name="close" className="size-3" /></button>
          </div>
        </div>
        <nav className="h-5 flex items-center justify-between text-[#b6bac1]">
          <div className="grid grid-cols-[63px_66px_63px_61px_63px_66px_65px_65px_66px_94px_72px_81px_82px_78px] whitespace-nowrap">
            {menus.map((menu) => (
              <button key={menu} className="text-center">{menu}</button>
            ))}
          </div>
          <div className="flex gap-1.5 pr-0.5">
            <button aria-label="minimise drawing"><Icon name="minimise" className="size-2.5" /></button>
            <button aria-label="restore drawing"><Icon name="restore" className="size-3" /></button>
            <button aria-label="close drawing"><Icon name="close" className="size-2.5" /></button>
          </div>
        </nav>
      </div>
    </header>
  );
}

function FileTabs() {
  const shape = "[clip-path:polygon(0_100%,5px_85%,10px_14%,15px_0,calc(100%-15px)_0,calc(100%-10px)_14%,calc(100%-5px)_85%,100%_100%)]";
  return (
    <div className="h-[25px] shrink-0 flex items-end pl-3 bg-[#222933]">
      <button className={`w-[135px] h-[22px] pl-5 pt-px text-left bg-[#2d3441] text-[#b6bac1] ${shape}`}>スタート</button>
      <button className={`-ml-1 w-[132px] h-[22px] px-3 pt-px flex items-center justify-between bg-[#3b4453] text-[#e4e6e9] ${shape}`}>
        <span>simplex_02*</span>
        <X size={12} strokeWidth={3} className="text-[#9aa0aa] mr-1.5" />
      </button>
      <button aria-label="new tab" className="w-5 h-[14px] mb-1 flex items-center justify-center rounded-md bg-[#2d3441]">
        <Icon name="plus" className="size-2" />
      </button>
    </div>
  );
}

function Toolbars() {
  return (
    <div className="shrink-0 flex flex-col gap-[3px] bg-[#3b4453] pt-1 pb-1 pl-px overflow-hidden">
      <div className="flex gap-0.5">
        <Toolbar><Tools names="dist radius angle area volume" /></Toolbar>
        <Toolbar>
          <Tools names="new open save | plot preview publish globe | cut copyclip paste match blockedit | undo" />
          <button aria-label="undo list" className="w-3 flex justify-center"><Caret className="size-1.5" /></button>
          <Tool name="redo" />
          <button aria-label="redo list" className="w-3.5 flex justify-center"><Caret className="size-1.5" /></button>
          <Tools names="| hand zoomrt zoomwin zoomprev | props designcenter toolpal sheetset dbconnect calc | help" />
        </Toolbar>
        <Toolbar>
          <Combo label="colour" value="ByLayer" width="w-[150px]"><Icon name="fill" className="size-3.5" /></Combo>
          <Sep />
          <Combo label="linetype" value="ByLayer" width="w-[160px]"><span className="w-[57px] h-px bg-black ml-0.5" /></Combo>
          <Sep />
          <Combo label="lineweight" value="ByLayer" width="w-[125px]"><span className="w-[35px] h-px bg-black ml-0.5" /></Combo>
          <Sep />
          <Combo label="plot style" value="ByColor" width="w-[120px]" tone="bg-[#cccccc] text-[#8a8a8a]" pad="pl-2" />
        </Toolbar>
        <Toolbar className="flex-1">
          <Tool name="textstyle" />
          <Combo label="text style" value="Annotative" width="w-[120px]" pad="pl-0"><Icon name="annot" className="size-3" /></Combo>
          <Sep />
          <Tool name="dimstyle" />
          <Combo label="dimension style" value="コピー ～ Annota" width="w-[120px]" pad="pl-0" size="text-[11px]"><Icon name="annot" className="size-3" /></Combo>
          <Sep />
          <Tool name="tablestyle" />
          <Combo label="table style" value="Standard" width="w-[120px]" />
          <Sep />
          <Tool name="leaderstyle" />
          <Combo label="leader style" value="Standard" width="w-[120px]" pad="pl-0"><Icon name="annot" className="size-3" /></Combo>
        </Toolbar>
      </div>
      <div className="flex gap-0.5">
        <Toolbar><Tools names="erase copy mirror offset array move rotate scale stretch trim extend breakpt break join chamfer fillet blend explode" /></Toolbar>
        <Toolbar>
          <Tool name="layers" />
          <Combo label="layer" value="0" width="w-[301px]">
            {["bulb", "sun", "vpsun", "unlock", "fill"].map((name) => <Icon key={name} name={name} className="size-[15px]" />)}
          </Combo>
          <Tools names="laycur layprev laystate" />
        </Toolbar>
        <Toolbar>
          <Tools names="vplist vp1 vppoly vpobj vpclip |" />
          <Combo label="viewport scale" value="尺度自動調整" width="w-[98px]" tone="bg-white text-black" pad="pl-0" />
        </Toolbar>
        <Toolbar>
          <Tools names="ucs ucslist |" />
          <Combo label="ucs" value="ワールド" width="w-[174px]" size="text-[11px]"><span className="pl-1"><Icon name="world" /></span></Combo>
        </Toolbar>
      </div>
      <div className="flex gap-0.5">
        <Toolbar><Tools names="line xline pline polygon rect arc circle cloud spline ellipse earc insert block points hatch gradient region table mtext addsel" /></Toolbar>
        <Toolbar>
          <Tools names="viewdlg | top bottom left right front back | sw se ne nw | camera | vpscale" />
          <Combo label="view" value="" width="w-[140px]" tone="bg-[#cccccc] text-[#8a8a8a]" />
        </Toolbar>
        <Toolbar><Tools names={Array.from({ length: 19 }, (_, i) => `px${i + 1}`).join(" ")} /></Toolbar>
      </div>
      <div className="flex gap-0.5">
        <Toolbar><Tools names="wall box wedge cone sphere cylinder torus pyramid helix plane | extrude presspull sweep revolve loft | union subtract intersect | gizmo gizmo2 slice boxes" /></Toolbar>
        <Toolbar><Tools names="laymatch laymake layiso layuniso laycopy laywalk | layfreeze layoff laylock layunlock" /></Toolbar>
        <Toolbar><Tools names="zwin zdyn zscale zcenter zobj | zin zout | zall zext" /></Toolbar>
        <Toolbar><Tools names="front1 back1 above under | abc hatchback" /></Toolbar>
        <Toolbar><Tools names="draw2d | vs1 vs2 vs3 vs4 | vs5" /></Toolbar>
        <Toolbar>
          <Tools names="attach |" />
          <input aria-label="group" className="w-[140px] h-[22px] bg-[#f0f0f0] border border-white outline-none" />
          <Tools names="| grp1 grp2 grp3 grp4" />
        </Toolbar>
      </div>
    </div>
  );
}

function PanelTitle({ children }) {
  return (
    <h2 className="h-[22px] shrink-0 flex items-center gap-1.5 px-1.5 bg-[#2c333f] text-[#d9dbde]">
      <span className="h-2.5 w-[3px] bg-[repeating-linear-gradient(to_bottom,#8d95a1_0_1px,transparent_1px_2px)]" />
      {children}
    </h2>
  );
}

function LayerPanel() {
  return (
    <aside className="w-[239px] shrink-0 flex flex-col bg-[#3b4453] border-r-2 border-[#323a47] text-[#e0e2e6] whitespace-nowrap">
      <PanelTitle>画層プロパティ管理</PanelTitle>
      <div className="h-[30px] flex items-center pl-[30px] shrink-0">
        <span className="w-[82px] shrink-0 pt-2 text-[11px]">現在の画層: 0 :</span>
        <div className="h-4 flex-1 min-w-0 flex items-center bg-[#4d586c] pr-0.5">
          <input aria-label="layer search" placeholder="次の画層を検索" className="flex-1 min-w-0 h-full bg-transparent text-[11px] placeholder-[#a9b0bc] outline-none" />
          <Search size={13} className="shrink-0" />
        </div>
      </div>
      <div className="h-[22px] shrink-0 flex items-center">
        <Tools names="lnew lkey lblue ldoc lsave" />
        <div className="h-5 flex gap-0.5"><Sep /><Sep /></div>
        <Tools names="lfilt lfold lgrp" />
        <div className="h-5 mx-0.5"><Sep /></div>
        <Tool name="layers" />
      </div>
      <div className="flex-1 min-h-0 flex gap-1">
        <div className="w-[26px] flex flex-col justify-between items-end py-0.5 border border-l-0 border-[#2f3744] text-[#d9dbde]">
          <button aria-label="expand filters" className="pt-px"><ChevronsRight size={18} strokeWidth={2.500} /></button>
          <button aria-label="expand list"><ChevronsRight size={18} strokeWidth={2.500} /></button>
        </div>
        <div className="flex-1 flex flex-col">
          <table className="w-full table-fixed border-collapse text-left">
            <thead>
              <tr className="h-[23px] bg-[#444e5f]">
                <th className="w-[25px] pl-1 font-normal border-r border-[#2f3744]">状..</th>
                <th className="pl-1 font-normal">
                  <div className="flex items-center justify-between pr-0.5">
                    名前
                    <span className="rotate-180"><Caret /></span>
                  </div>
                </th>
                <th className="w-[25px] pl-1 font-normal border-l-2 border-[#2f3744]">表..</th>
              </tr>
            </thead>
            <tbody>
              <tr className="h-[18px] bg-[#7488a8]">
                <td className="pl-0.5"><Check size={13} strokeWidth={4} className="text-[#6ccf9c]" /></td>
                <td className="pl-[3px]">0</td>
                <td className="pl-1 border-l-2 border-[#2f3744]"><Icon name="bulbsm" className="size-3.5" /></td>
              </tr>
              <tr className="h-[18px]">
                <td className="pl-0.5"><Icon name="leaf" className="size-3.5" /></td>
                <td className="pl-[3px]">Defpoints</td>
                <td className="pl-1 border-l-2 border-[#2f3744]"><Icon name="bulbsm" className="size-3.5" /></td>
              </tr>
            </tbody>
          </table>
          <div className="flex-1 mr-[23px] border-r-2 border-[#2f3744]" />
          <div className="h-[17px] flex items-center bg-[#f0f0f0] text-[#444]">
            <ChevronLeft size={15} strokeWidth={2.500} />
            <span className="w-[17px] h-full bg-[#cdcdcd] ml-0.5" />
            <ChevronRight size={15} strokeWidth={2.500} className="ml-auto" />
          </div>
        </div>
      </div>
      <div className="h-10 shrink-0 flex items-center gap-1 pt-2 border-b border-[#2a313d] overflow-hidden">
        <Icon name="ffolder" />
        <Caret />
        <span className="pl-1 text-[11px]">すべて(A): 表示されている画層 2 個、画層</span>
      </div>
    </aside>
  );
}

function Drawing() {
  return (
    <div className="flex-1 min-h-0 flex">
      <div className="relative flex-1 min-w-0 overflow-hidden bg-[#8a8a8a]">
        <div className="absolute left-[336px] top-[90px] w-[728px] h-[512px] bg-white border border-[#6f6f6f] shadow-[2px_2px_2px_#777]" />
        <div className="absolute left-[385px] top-[106px] w-[631px] h-[479px] border border-dashed border-[#8a8a8a]" />
        <svg viewBox="0 0 98 98" className="absolute left-[1215px] top-[350px] size-[98px]" fill="none" stroke="#111">
          <path d="M48.500 0v45.500M48.500 51.500V98M0 48.500h45.500M51.500 48.500H98M45.500 45.500h6v6h-6z" />
        </svg>
        <svg viewBox="0 0 54 92" className="absolute left-[12px] bottom-[11px] w-[54px] h-[92px]" fill="none" stroke="#1f4fd0" strokeWidth="1.2">
          <path d="M2.500 2v86.500h50zM2.500 80.500h8v8M4 28l6 6 6-6M10.500 34v6M30 75l12 12M42 75L30 87" />
        </svg>
      </div>
      <div className="w-[17px] shrink-0 flex flex-col items-center justify-between bg-[#f0f0f0] text-[#444]">
        <ChevronUp size={15} strokeWidth={2.500} />
        <div className="flex-1 w-full flex flex-col">
          <div className="grow-[442]" />
          <div className="h-[17px] bg-[#cdcdcd]" />
          <div className="grow-[260]" />
        </div>
        <ChevronDown size={15} strokeWidth={2.500} />
      </div>
    </div>
  );
}

function CommandLine() {
  return (
    <div className="h-[62px] shrink-0 flex pt-[3px] bg-[#2c333f]">
      <div className="w-[25px] flex flex-col items-center justify-between pt-1 pb-1.5 pr-0.5 text-[#d9dbde]">
        <span className="w-[18px] h-[6px] bg-[radial-gradient(#c4c8ce_50%,transparent_55%)] bg-[length:3px_3px]" />
        <X size={13} strokeWidth={3} />
        <span />
        <Wrench size={15} className="fill-[#d9dbde]" />
      </div>
      <div className="flex-1 flex flex-col border border-l-0 border-[#15191f]">
        <div className="flex-1 bg-[#c8c8c8] px-0.5 text-black leading-[15px] font-['Liberation_Mono','Noto_Sans_CJK_JP',monospace] whitespace-pre pt-[5px]">
          <p>コマンド:   &lt;切り替え先: Layout1&gt;</p>
          <p>レイアウトを再作図中。</p>
        </div>
        <div className="h-[21px] flex items-center gap-1 pl-1 bg-white border-t border-[#15191f]">
          <Icon name="prompt" />
          <Icon name="caret" className="size-2 brightness-50" />
          <input aria-label="command" placeholder="ここにコマンドを入力" className="flex-1 italic outline-none text-[11px] placeholder-[#808080]" />
        </div>
      </div>
    </div>
  );
}

// [label, value, dimmed, sample]
const groups = [
  ["一般", [["色", "ByLayer", false, "swatch"], ["画層", "0"], ["線種", "ByLay...", false, "line"], ["線種尺度", "1"], ["線の太さ", "ByLay...", false, "line"], ["透過性", "ByLayer"], ["厚さ", "0"]]],
  ["3D 表示", [["マテリアル", "ByLayer"]]],
  ["レイアウト", [["レイアウト名", "Layout1"], ["ページ設定名", "<なし>", true], ["ラスター作成の...", "300"]]],
  ["印刷スタイル", [["印刷スタイル", "ByColor", true], ["印刷スタイル テ...", "なし"], ["アタッチされた印...", "Layout1", true], ["印刷テーブルのタ...", "使用できません。", true]]],
  ["ビュー", [["中心 X", "129.8", true], ["中心 Y", "85.7", true], ["中心 Z", "0", true], ["高さ", "305.5", true], ["幅", "574.2", true]]],
  ["その他", [["注釈尺度", "1:1", true], ["UCS アイコン オン", "はい"], ["原点に UCS ア...", "いいえ"], ["ビューポートごとの...", "はい"], ["UCS 名", ""], ["表示スタイル", "2D ワイヤフレーム", true]]],
];

const samples = {
  swatch: <span className="inline-block align-middle size-3.5 mr-1.5 rounded-xs bg-black" />,
  line: <span className="inline-block align-middle w-[38px] h-px ml-0.5 mr-1 bg-white" />,
};

function PropertiesPanel() {
  return (
    <aside className="w-[257px] shrink-0 flex bg-[#3b4453] text-[#d9dbde] whitespace-nowrap">
      <div className="w-[23px] shrink-0 flex flex-col pl-0.5 pt-6" role="tablist">
        {["デザイン", "表示", "拡張データ"].map((tab, i) => (
          <button
            key={tab}
            role="tab"
            aria-selected={i === 0}
            className={`h-[121px] flex items-center justify-center pl-1 rounded-l-md border border-r-0 border-[#262d38] ${i ? "bg-[#2c333f]" : "bg-[#3b4453]"}`}
          >
            <span className="[writing-mode:vertical-rl] [text-orientation:sideways] rotate-180">{tab}</span>
          </button>
        ))}
      </div>
      <div className="flex-1 min-w-0 flex flex-col">
        <PanelTitle>プロパティ</PanelTitle>
        <div className="flex items-center gap-2 pt-3 pl-[5px]">
          <div className="w-[146px] h-6 flex items-center pr-1 bg-[#4a5569] border border-[#2c333f]">
            <select aria-label="selection" className="flex-1 min-w-0 h-full pl-0.5 appearance-none bg-transparent outline-none text-[11px]">
              <option>何も選択されていません</option>
            </select>
            <Caret />
          </div>
          <button aria-label="toggle pickadd"><Icon name="psel1" /></button>
          <button aria-label="select objects"><Icon name="psel2" /></button>
          <button aria-label="quick select"><Icon name="psel3" /></button>
        </div>
        <div className="pl-2.5 pr-[18px] pt-[3px] flex flex-col gap-0.5 flex-1">
          {groups.map(([title, rows]) => (
            <section key={title}>
              <button className="w-full h-5 flex items-center justify-between px-[7px] bg-[#2c333f] font-semibold text-white">
                {title}
                <Caret />
              </button>
              <table className="w-[189px] ml-auto table-fixed border-collapse text-[11px]">
                <tbody>
                  {rows.map(([label, value, dimmed, sample]) => (
                    <tr key={label} className="h-[19px]">
                      <th className="w-[99px] pl-[5px] py-0 text-left font-normal border border-[#303846] leading-4">{label}</th>
                      <td className={`pl-0.5 py-0 border border-[#303846] leading-4 ${dimmed ? "text-[#8b929d]" : "text-[#f0f1f3]"}`}>
                        {samples[sample]}{value}
                      </td>
                    </tr>
                  ))}
                </tbody>
              </table>
            </section>
          ))}
        </div>
        <div className="h-1 border-t border-[#2a313d]" />
      </div>
    </aside>
  );
}

// [icon, width, active]
const statusLeft = [
  ["dyn", "w-6", true], ["ortho", "w-6", true], ["polar", "w-6"], ["caret", "w-[15px]"],
  ["isodraft", "w-6"], ["osnap", "w-6", true], ["caret", "w-[15px]"], ["lwt", "w-6"], ["transp", "w-6"], ["cycle", "w-6"],
  ["annosel", "w-6"], ["anno1", "w-6"], ["anno2", "w-6"], ["gear", "w-6"], ["caret", "w-4"], ["plus", "w-6"],
];
const statusRight = [
  ["isolate", "w-6"], ["gauge", "w-6 mr-1.5", true], ["hw", "w-6", true], ["ws", "w-6"], ["trust", "w-[22px]"],
  ["graph", "w-[22px] mr-1"], ["full", "w-6"], ["menu", "w-6"],
];

function StatusItem({ item: [name, width, active] }) {
  return (
    <button aria-label={name} className={`${width} h-6 shrink-0 flex items-center justify-center ${active ? "bg-[#5b8bc2]" : "bg-[#3b4453]"}`}>
      <Icon name={name} className={name === "caret" ? "size-2" : "size-4"} />
    </button>
  );
}

function StatusBar() {
  const shape = "[clip-path:polygon(0_0,100%_0,calc(100%-6px)_75%,calc(100%-12px)_100%,12px_100%,6px_75%)]";
  return (
    <footer className="h-[29px] shrink-0 flex bg-[#222933] border-t border-[#3b4453] text-[#d9dbde] whitespace-nowrap">
      <div className="flex items-start pl-3">
        <button className={`w-[50px] h-[17px] leading-4 bg-[#2f3744] text-[#a5abb5] ${shape}`}>モデル</button>
        <button className={`w-[66px] h-[17px] leading-4 bg-[#3b4453] text-white font-semibold ${shape}`}>Layout1</button>
        <button aria-label="new layout" className={`w-7 h-4 flex items-center justify-center bg-[#2f3744] ${shape}`}><Icon name="plus" className="size-2" /></button>
      </div>
      <div className="flex-1 flex items-center justify-end gap-px pr-0.5">
        <output className="w-[140px] h-6 leading-6 pr-1.5 mr-0.5 text-right bg-[#3b4453] text-xs">358.4, 75.9, 0.0</output>
        <button className="w-[43px] h-6 mr-0.5 bg-[#3b4453] text-[11px]">ペーパー</button>
        {statusLeft.map((item, i) => (
          <StatusItem key={i} item={item} />
        ))}
        <button className="w-[97px] h-6 flex items-center justify-between px-0.5 mr-0.5 bg-[#3b4453] text-xs">
          Medium Detail
          <Caret />
        </button>
        <button className="w-[46px] h-6 flex items-center justify-between px-1 mr-0.5 bg-[#3b4453]">
          <Icon name="elev" />
          +0
        </button>
        {statusRight.map((item) => (
          <StatusItem key={item[0]} item={item} />
        ))}
      </div>
    </footer>
  );
}

export default function App() {
  return (
    <div className="h-screen bg-white pr-1 font-['Open_Sans','Noto_Sans_CJK_JP',sans-serif] text-[12px] leading-4 [font-feature-settings:'palt']">
      <div className="h-full flex flex-col overflow-hidden">
        <TitleBar />
        <FileTabs />
        <Toolbars />
        <main className="flex-1 min-h-0 flex">
          <LayerPanel />
          <div className="flex-1 min-w-0 flex flex-col">
            <Drawing />
            <div className="h-[17px] shrink-0 flex items-center bg-[#f0f0f0] text-[#444] pr-[17px]">
              <ChevronLeft size={15} strokeWidth={2.500} />
              <div className="flex-1 h-full flex justify-center pl-3"><span className="w-[17px] h-full bg-[#cdcdcd]" /></div>
              <ChevronRight size={15} strokeWidth={2.500} />
            </div>
            <CommandLine />
          </div>
          <PropertiesPanel />
        </main>
        <StatusBar />
      </div>
    </div>
  );
}
